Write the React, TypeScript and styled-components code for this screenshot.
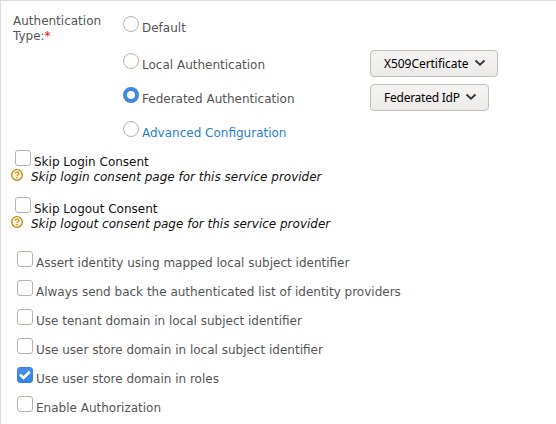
import React from "react";
import styled, { createGlobalStyle } from "styled-components";

const GlobalStyle = createGlobalStyle`
  * { box-sizing: border-box; }
  body {
    margin: 0;
    background: #fff;
    font: 12px/14px "DejaVu Sans", sans-serif;
    color: #555;
  }
`;

const Panel = styled.main`
  width: 556px;
  height: 424px;
  overflow: hidden;
  border-top: 1px solid #dedede;
  border-left: 1px solid #dedede;
`;

const TypeSection = styled.section`
  display: flex;
  height: 149px;
`;

const TypeLabel = styled.div`
  width: 122px;
  padding: 13px 0 0 12px;
  line-height: 15px;
`;

const Required = styled.span`
  color: #f00;
`;

const Options = styled.div`
  width: 247px;
  padding-top: 15px;
`;

const Row = styled.label<{ $height: number }>`
  display: flex;
  align-items: flex-start;
  gap: 3px;
  height: ${(p) => p.$height}px;
`;

const Text = styled.span<{ $color?: string }>`
  margin-top: 5px;
  white-space: nowrap;
  color: ${(p) => p.$color ?? "inherit"};
`;

const Radio = styled.span<{ $checked?: boolean }>`
  flex: none;
  width: 16px;
  height: 16px;
  border-radius: 50%;
  border: ${(p) => (p.$checked ? "4px solid #3f87e5" : "1px solid #b9b2aa")};
  background: #fff;
`;

const Box = styled.span<{ $checked?: boolean }>`
  flex: none;
  display: flex;
  width: 16px;
  height: 16px;
  border-radius: 3px;
  border: 1px solid ${(p) => (p.$checked ? "#3b82e0" : "#b9b2aa")};
  background: ${(p) => (p.$checked ? "linear-gradient(#4a90e8, #3580e4)" : "#fff")};
`;

const Selects = styled.div`
  display: flex;
  flex-direction: column;
  align-items: flex-start;
  gap: 7px;
  padding-top: 49px;
`;

const Select = styled.button<{ $width: number; $spacing: number }>`
  display: flex;
  align-items: center;
  justify-content: space-between;
  width: ${(p) => p.$width}px;
  height: 27px;
  padding: 0 11px 0 13px;
  border: 1px solid #c5bfb8;
  border-radius: 4px;
  background: linear-gradient(#f5f4f3, #edebe9);
  color: #000;
  font: 12px/16px "Noto Sans", sans-serif;
  letter-spacing: ${(p) => p.$spacing}px;
  white-space: nowrap;

  svg {
    margin-bottom: 1px;
  }
`;

const ConsentSection = styled.section`
  height: 101px;
  color: #111;
`;

const Consent = styled.div`
  height: 47px;
  padding-left: 10px;
`;

const ConsentRow = styled(Row)`
  padding-left: 4px;
`;

const Hint = styled.div`
  display: flex;
  align-items: flex-start;
  gap: 8px;
  height: 14px;
  font-style: italic;

  svg {
    margin-top: -1px;
  }
`;

const List = styled.section`
  padding-left: 16px;
`;

const Chevron = () => (
  <svg width="12" height="8" viewBox="0 0 12 8" fill="none">
    <path d="M1.5 1.5 6 5.7l4.5-4.2" stroke="#333a3c" strokeWidth="2" />
  </svg>
);

const Tick = () => (
  <svg width="14" height="14" viewBox="0 0 14 14" fill="none">
    <path d="m2 6.4 3.6 3.5 6.1-6.1" stroke="#fff" strokeWidth="2.8" />
  </svg>
);

const Help = () => (
  <svg width="12" height="12" viewBox="0 0 12 12" fill="none">
    <circle cx="6" cy="6" r="5.3" fill="#fff9e4" stroke="#b88a1c" strokeWidth="1.3" />
    <path d="M4.2 4.6c0-2 3.6-2 3.6-.1 0 1.2-1.7 1.2-1.7 2.6" stroke="#e08a1c" strokeWidth="1.4" />
    <path d="M5.3 8h1.5v1.4H5.3z" fill="#e08a1c" />
  </svg>
);

const consents = [
  ["Skip Login Consent", "Skip login consent page for this service provider"],
  ["Skip Logout Consent", "Skip logout consent page for this service provider"],
];

const settings = [
  { label: "Assert identity using mapped local subject identifier" },
  { label: "Always send back the authenticated list of identity providers" },
  { label: "Use tenant domain in local subject identifier" },
  { label: "Use user store domain in local subject identifier" },
  { label: "Use user store domain in roles", checked: true },
  { label: "Enable Authorization" },
];

export default function App() {
  return (
    <>
      <GlobalStyle />
      <Panel>
        <TypeSection>
          <TypeLabel>
            Authentication
            <br />
            Type:<Required>*</Required>
          </TypeLabel>
          <Options>
            <Row $height={37}><Radio /><Text>Default</Text></Row>
            <Row $height={34}><Radio /><Text>Local Authentication</Text></Row>
            <Row $height={34}><Radio $checked /><Text>Federated Authentication</Text></Row>
            <Row $height={19}><Radio /><Text $color="#2a7fc9">Advanced Configuration</Text></Row>
          </Options>
          <Selects>
            <Select $width={128} $spacing={-0.05}>X509Certificate<Chevron /></Select>
            <Select $width={119} $spacing={-0.25}>Federated IdP<Chevron /></Select>
          </Selects>
        </TypeSection>
        <ConsentSection>
          {consents.map(([label, hint]) => (
            <Consent key={label}>
              <ConsentRow $height={20}><Box /><Text>{label}</Text></ConsentRow>
              <Hint><Help /><span>{hint}</span></Hint>
            </Consent>
          ))}
        </ConsentSection>
        <List>
          {settings.map(({ label, checked }) => (
            <Row key={label} $height={29}>
              <Box $checked={checked}>{checked && <Tick />}</Box>
              <Text>{label}</Text>
            </Row>
          ))}
        </List>
      </Panel>
    </>
  );
}
